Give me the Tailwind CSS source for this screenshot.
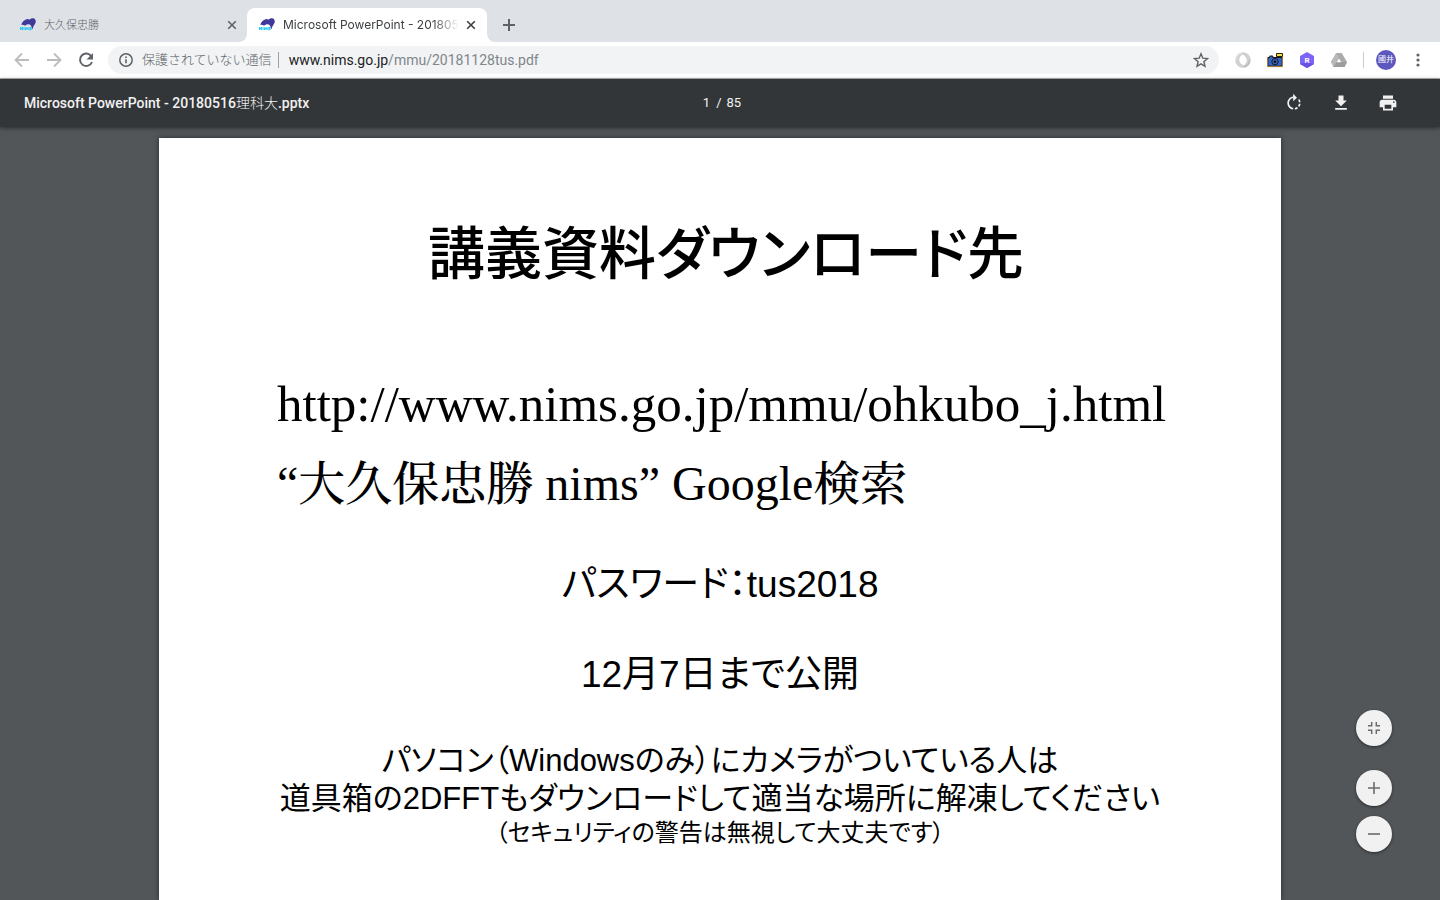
<!DOCTYPE html>
<html lang="ja">
<head>
<meta charset="utf-8">
<title>Microsoft PowerPoint - 20180516理科大.pptx</title>
<script src="https://cdn.jsdelivr.net/npm/@tailwindcss/browser@4"></script>
</head>
<body class="h-screen flex flex-col overflow-hidden bg-[#525659] font-[Roboto,'Noto_Sans_CJK_JP',sans-serif]">
<svg class="hidden">
  <symbol id="nims" viewBox="0 0 16 16">
    <path fill="#3f3a99" d="M1.200 7.800C2 4.800 4.600 2.300 7.400 1.900c1 0 1.700.3 2.200.8C10.500 1.500 12 1 13.400 1.300 15.300 1.800 16 3.500 15.700 5.200c-.4 2-2 3.200-2.600 5.100-.2.800-.3 1.500-.5 1.900-.9-.7-.9-2.700-1.900-3.900C9.900 7.200 8.500 6.900 7.200 7.400 6.300 7.800 5.800 8.300 4.600 8.500c-1-.8-2-.9-3.400-.7z"/>
    <path fill="none" stroke="#19c4f5" stroke-width="1" d="M.6 13V10.200l1.800 2.600V10M4 10v3M5.400 13l.5-2.600 1 2 1-2 .4 2.600M11.400 10.400H9.700v1.100h1.500v1.200H9.300"/>
  </symbol>
  <symbol id="close" viewBox="0 0 10 10"><path d="M1.200 1.200l7.600 7.600M8.800 1.200L1.200 8.800" fill="none" stroke="currentColor" stroke-width="1.600"/></symbol>
</svg>

<header class="shrink-0">
  <div class="flex h-[42px] items-end bg-[#dee1e6]" role="tablist">
    <div class="flex h-[34px] w-[247px] items-center pl-5 pr-[10px] text-[#5f6368]" role="tab">
      <svg class="size-4 shrink-0"><use href="#nims"/></svg>
      <span class="ml-2 flex-1 pt-px text-[11px] leading-4 font-light">大久保忠勝</span>
      <button class="p-0" aria-label="閉じる"><svg class="size-[10px]"><use href="#close"/></svg></button>
    </div>
    <div class="relative flex h-[34px] w-[240px] items-center rounded-t-lg bg-white pl-3 pr-[11px] text-[#3c4043]" role="tab" aria-selected="true">
      <svg class="absolute -left-2 bottom-0 size-2 text-white" viewBox="0 0 8 8"><path fill="currentColor" d="M8 0v8H0a8 8 0 0 0 8-8z"/></svg>
      <svg class="absolute -right-2 bottom-0 size-2 text-white" viewBox="0 0 8 8"><path fill="currentColor" d="M0 0v8h8a8 8 0 0 1-8-8z"/></svg>
      <svg class="size-4 shrink-0"><use href="#nims"/></svg>
      <span class="ml-2 w-[176px] overflow-hidden whitespace-nowrap font-[Inter,'Noto_Sans_CJK_JP',sans-serif] text-[12px] leading-4 mask-r-from-85% mask-r-to-100%">Microsoft PowerPoint - 20180516理科大.pptx</span>
      <button class="ml-auto p-0" aria-label="閉じる"><svg class="size-[10px]"><use href="#close"/></svg></button>
    </div>
    <button class="mb-[11px] ml-4 text-[#5f6368]" aria-label="新しいタブ"><svg class="size-3" viewBox="0 0 12 12"><path d="M6 0v12M0 6h12" stroke="currentColor" stroke-width="2"/></svg></button>
  </div>

  <div class="flex h-[37px] items-center border-b border-[#b6b4b6] bg-white pl-[10px] pr-[14px]">
    <nav class="flex items-center gap-2 text-[#5f6368]">
      <button class="text-[#babcbe]" aria-label="戻る"><svg class="size-6" viewBox="0 0 24 24"><path d="M19 12H6M12 5.500L5.500 12l6.500 6.500" fill="none" stroke="currentColor" stroke-width="1.800"/></svg></button>
      <button class="text-[#babcbe]" aria-label="進む"><svg class="size-6" viewBox="0 0 24 24"><path d="M5 12h13M12 5.500l6.500 6.500-6.500 6.500" fill="none" stroke="currentColor" stroke-width="1.800"/></svg></button>
      <button aria-label="再読み込み"><svg class="size-6" viewBox="0 0 24 24"><path fill="none" stroke="currentColor" stroke-width="2" d="M17.300 8.200A6.200 6.200 0 1 0 18 14"/><path fill="currentColor" d="M19 5v6.500h-6.500z"/></svg></button>
    </nav>
    <div class="ml-[10px] flex h-7 flex-1 items-center rounded-full bg-[#f1f3f4] pl-[10px] pr-[10px] text-[14px] leading-5">
      <svg class="size-4 text-[#5f6368]" viewBox="0 0 16 16"><circle cx="8" cy="8" r="6.200" fill="none" stroke="currentColor" stroke-width="1.500"/><path d="M8 7.200v4M8 4.400v1.600" stroke="currentColor" stroke-width="1.600"/></svg>
      <span class="ml-2 text-[13px] font-light text-[#5f6368]">保護されていない通信</span>
      <span class="ml-[6px] h-4 w-px bg-[#9aa0a6]"></span>
      <a href="#" class="ml-[10px] flex-1 text-[#80868b]"><span class="text-[#202124]">www.nims.go.jp</span>/mmu/20181128tus.pdf</a>
      <button aria-label="ブックマーク" class="text-[#5f6368]"><svg class="size-4" viewBox="0 0 16 16"><path d="M8 1.800l1.800 4.400 4.700.4-3.600 3.100 1.100 4.600L8 11.800l-4 2.500 1.100-4.600L1.500 6.600l4.700-.4z" fill="none" stroke="currentColor" stroke-width="1.400"/></svg></button>
    </div>
    <div class="ml-4 flex items-center gap-4">
      <button aria-label="拡張機能"><svg class="size-4" viewBox="0 0 16 16"><circle cx="8" cy="8" r="7.800" fill="#d0d0d0"/><path d="M6.800 1C3 2 .8 5 1 8.500" fill="none" stroke="#e6e6e6" stroke-width="1.200"/><path d="M7.500 2.500C4.600 4.500 3.600 7 4.600 9.600c.6 1.600 2 2.900 3.900 3.900C11.400 11.500 12.300 9 11.400 6.500 10.700 4.800 9.300 3.500 7.500 2.500z" fill="#fff"/><path d="M8.500 15c3.500-.7 6-3.500 6-7" fill="none" stroke="#b9b9b9" stroke-width="1.200"/></svg></button>
      <button aria-label="カメラ"><svg class="size-4" viewBox="0 0 16 16"><path d="M9.500 1.500h6v3h-6z" fill="#f5e13b" stroke="#2b2208"/><path d="M.8 5.500h2V4h3v1.500h9.400v8.700H.8z" fill="#3565c4" stroke="#1c1409"/><path d="M.3 5v9.700h15.400V5" fill="none" stroke="#e09a1a" stroke-width=".7"/><circle cx="8" cy="9.700" r="3.200" fill="#3a63b4" stroke="#14182c"/><circle cx="8" cy="9.700" r="1.300" fill="#0a0c20"/></svg></button>
      <button aria-label="R"><svg class="size-4" viewBox="0 0 16 16"><path d="M8 0l7 4v8l-7 4-7-4V4z" fill="#7c65f6"/><path d="M1 12l7 4 7-4-7-2z" fill="#6a4fe0"/><text x="8" y="11" text-anchor="middle" font-size="8" font-weight="700" fill="#fff">R</text></svg></button>
      <button aria-label="ドライブ"><svg class="size-4" viewBox="0 0 16 16"><path d="M5.300 1h5.400L16 10l-2.600 5H2.600L0 10z" fill="#aaa"/><path d="M5.300 1L0 10l2.600 5L8 5.500z" fill="#b9b9b9"/><path d="M5.500 10H16l-2.600 5H2.600z" fill="#9c9c9c"/><path d="M8 6.500l2.300 3.700H5.700z" fill="#fff"/></svg></button>
      <span class="h-4 w-px bg-[#c9cbce]"></span>
      <button class="-ml-1 size-5 rounded-full bg-[#5c58bd] text-center text-[8px] leading-5 text-white" aria-label="プロフィール">國井</button>
      <button aria-label="メニュー" class="-ml-px text-[#5f6368]"><svg class="-ml-px size-4" viewBox="0 0 16 16"><g fill="currentColor"><circle cx="8" cy="3" r="1.600"/><circle cx="8" cy="8" r="1.600"/><circle cx="8" cy="13" r="1.600"/></g></svg></button>
    </div>
  </div>
</header>

<div class="relative z-10 grid h-12 shrink-0 grid-cols-3 items-center bg-[#323639] px-6 text-[13px] text-[#f1f1f1] shadow-[0_1px_4px_rgba(0,0,0,0.5)]">
  <h1 class="text-[14px] font-medium whitespace-nowrap">Microsoft PowerPoint - 20180516<span class="font-light">理科大</span>.pptx</h1>
  <p class="pl-1 text-center"><span class="mr-[6px]">1</span>/<span class="ml-[5px]">85</span></p>
  <div class="flex justify-end gap-[27px] pr-[18px]">
    <button aria-label="回転"><svg class="size-5" viewBox="0 0 24 24" fill="currentColor"><path d="M15.550 5.550L11 1v3.070C7.060 4.560 4 7.920 4 12s3.050 7.440 7 7.930v-2.020c-2.840-.48-5-2.940-5-5.910s2.160-5.430 5-5.910V10l4.550-4.450zM19.930 11c-.17-1.390-.72-2.730-1.620-3.890l-1.420 1.420c.54.750.88 1.600 1.020 2.470h2.020zM13 17.900v2.020c1.390-.17 2.740-.71 3.900-1.610l-1.440-1.440c-.75.540-1.590.89-2.460 1.030zm3.890-2.420l1.420 1.410c.9-1.160 1.450-2.500 1.620-3.890h-2.020c-.14.870-.48 1.720-1.020 2.480z"/></svg></button>
    <button aria-label="ダウンロード"><svg class="size-5" viewBox="0 0 24 24" fill="currentColor"><path d="M19 9h-4V3H9v6H5l7 7 7-7zM5 18v2h14v-2H5z"/></svg></button>
    <button aria-label="印刷"><svg class="size-5" viewBox="0 0 24 24" fill="currentColor"><path d="M19 8H5c-1.660 0-3 1.340-3 3v6h4v4h12v-4h4v-6c0-1.660-1.340-3-3-3zm-3 11H8v-5h8v5zm3-7c-.55 0-1-.45-1-1s.45-1 1-1 1 .45 1 1-.45 1-1 1zm-1-9H6v4h12V3z"/></svg></button>
  </div>
</div>

<main class="relative min-h-0 flex-1 overflow-hidden pt-[11px]">
  <article class="mx-auto min-h-full w-full max-w-[1122px] bg-white pt-20 text-center text-black shadow-[0_0_5px_rgba(0,0,0,0.5)] font-['Liberation_Sans','Noto_Sans_CJK_JP',sans-serif] [font-feature-settings:'palt']">
    <h2 class="pl-3 text-[57px] leading-[72px] font-medium whitespace-nowrap">講義資料ダウンロード先</h2>
    <div class="mt-[74px] pl-[118px] text-left leading-20 whitespace-nowrap font-['Liberation_Serif','Noto_Serif_CJK_JP',serif]">
      <p class="text-[51px] leading-20"><a href="#">http://www.nims.go.jp/mmu/ohkubo_j.html</a></p>
      <p class="text-[48px] leading-20">“<span class="text-[47px] font-medium">大久保忠勝</span> nims” Google<span class="text-[47px] font-medium">検索</span></p>
    </div>
    <p class="mt-[38px] text-[37px] leading-[46px]">パスワード：tus2018</p>
    <p class="mt-[44px] text-[37px] leading-[46px]">12月7日まで公開</p>
    <p class="mt-[44px] text-[31px] leading-[38px] whitespace-nowrap">パソコン（Windowsのみ）にカメラがついている人は<br>道具箱の2DFFTもダウンロードして適当な場所に解凍してください</p>
    <p class="text-[24px] leading-[30px] whitespace-nowrap">（セキュリティの警告は無視して大丈夫です）</p>
  </article>
  <div class="absolute right-12 bottom-12 flex flex-col gap-[10px] text-[#6b6b6b]">
    <button class="mb-[14px] grid size-9 place-items-center rounded-full bg-[#f1f1f1] shadow-[0_1px_3px_rgba(0,0,0,0.5)]" aria-label="ページに合わせる"><svg class="size-3" viewBox="0 0 12 12"><path d="M0 3.700h3.700V0M8.300 0v3.700H12M0 8.300h3.700V12M8.300 12V8.300H12" fill="none" stroke="currentColor" stroke-width="1.500"/></svg></button>
    <button class="grid size-9 place-items-center rounded-full bg-[#f1f1f1] shadow-[0_1px_3px_rgba(0,0,0,0.5)]" aria-label="拡大"><svg class="size-3" viewBox="0 0 12 12"><path d="M6 0v12M0 6h12" stroke="currentColor" stroke-width="1.600"/></svg></button>
    <button class="grid size-9 place-items-center rounded-full bg-[#f1f1f1] shadow-[0_1px_3px_rgba(0,0,0,0.5)]" aria-label="縮小"><svg class="size-3" viewBox="0 0 12 12"><path d="M0 6h12" stroke="currentColor" stroke-width="1.600"/></svg></button>
  </div>
</main>
</body>
</html>
